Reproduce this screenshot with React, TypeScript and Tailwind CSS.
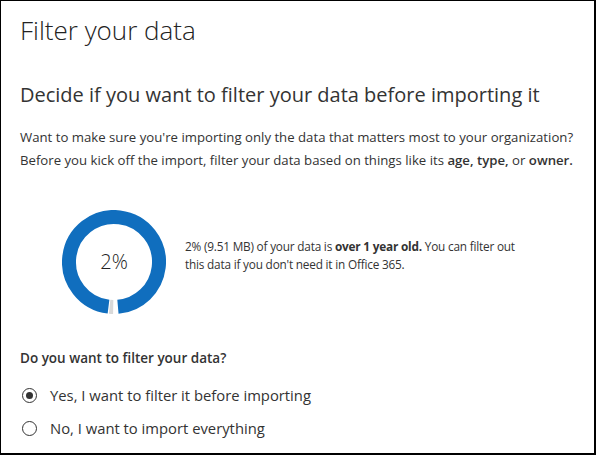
export default function App() {
  return (
    <div className="h-[455px] w-[596px] overflow-hidden border-t border-l border-r-2 border-b-2 border-black bg-white font-['Open_Sans',sans-serif] text-[#333]">
      <div className="pl-[19px] pr-4">
        <h1 className="mt-[12px] text-[26px] leading-[34px] font-light text-[#222]">Filter your data</h1>

        <h2 className="mt-[34px] text-[20px] leading-[28px] font-normal text-[#333]">
          Decide if you want to filter your data before importing it
        </h2>

        <p className="mt-[17px] text-[13.2px] leading-[23px] text-[#333]">
          Want to make sure you're importing only the data that matters most to your organization?
          <br />
          Before you kick off the import, filter your data based on things like its{" "}
          <span className="font-semibold">age, type,</span> or <span className="font-semibold">owner.</span>
        </p>

        <div className="mt-[38px] flex items-center">
          <Donut />
          <p className="ml-[19px] mb-[14px] w-[350px] text-[11.8px] leading-[18px] tracking-[-0.2px] text-[#333]">
            2% (9.51 MB) of your data is <span className="font-bold">over 1 year old.</span> You can filter out
            <br />
            this data if you don't need it in Office 365.
          </p>
        </div>

        <div className="mt-[34px] text-[13.5px] leading-[20px] font-semibold text-[#333]">
          Do you want to filter your data?
        </div>

        <div className="mt-[17px] flex flex-col gap-[13px]">
          <Radio checked label="Yes, I want to filter it before importing" />
          <Radio label="No, I want to import everything" />
        </div>
      </div>
    </div>
  );
}

function Donut() {
  const r = 45;
  const c = 2 * Math.PI * r;
  return (
    <div className="relative ml-[42px] h-[104px] w-[104px]">
      <svg width="104" height="104" viewBox="0 0 104 104">
        {/* blue ring, rotated so the gap sits at the bottom */}
        <circle
          cx="52"
          cy="52"
          r={r}
          fill="none"
          stroke="#106EBE"
          strokeWidth="14"
          strokeDasharray={`${c * 0.965} ${c}`}
          transform="rotate(97 52 52)"
        />
        <circle
          cx="52"
          cy="52"
          r={r}
          fill="none"
          stroke="#d9d9d9"
          strokeWidth="14"
          strokeDasharray={`${c * 0.013} ${c}`}
          transform="rotate(91 52 52)"
        />
      </svg>
      <span className="absolute inset-0 flex items-center justify-center text-[20px] font-light text-[#222]">
        2%
      </span>
    </div>
  );
}

function Radio({ checked, label }: { checked?: boolean; label: string }) {
  return (
    <label className="flex items-center text-[14.8px] leading-[20px] text-[#333]">
      <span className="ml-[2px] flex h-[15px] w-[15px] items-center justify-center rounded-full border-[1.5px] border-[#333]">
        {checked && <span className="h-[7px] w-[7px] rounded-full bg-[#333]" />}
      </span>
      <span className="ml-[13px]">{label}</span>
    </label>
  );
}
